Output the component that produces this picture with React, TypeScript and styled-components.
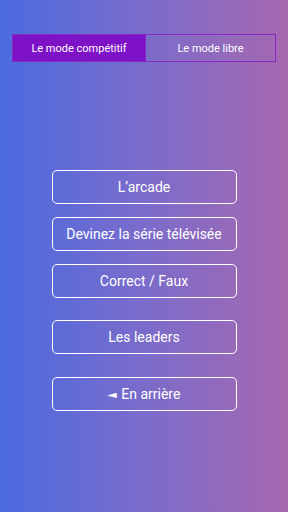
import React, { useState } from 'react';
import styled, { createGlobalStyle } from 'styled-components';

const GlobalStyle = createGlobalStyle`
    html, body {
        margin: 0;
        padding: 0;
    }
    body {
        font-family: Roboto, "Liberation Sans", sans-serif;
    }
`;

const menu = [
    { label: 'L\u2019arcade', gap: 0 },
    { label: 'Devinez la série télévisée', gap: 13 },
    { label: 'Correct / Faux', gap: 13 },
    { label: 'Les leaders', gap: 22 },
    { label: 'En arrière', gap: 23, back: true },
];

const App: React.FC = () => {
    const [mode, setMode] = useState(0);

    return (
        <Screen>
            <GlobalStyle />
            <Tabs>
                <Tab active={mode === 0} onClick={() => setMode(0)}>Le mode compétitif</Tab>
                <Tab active={mode === 1} onClick={() => setMode(1)}>Le mode libre</Tab>
            </Tabs>
            <Menu>
                {menu.map((item) => (
                    <MenuButton key={item.label} gap={item.gap}>
                        {item.back && <Arrow>{'\u25C4'}</Arrow>}
                        {item.label}
                    </MenuButton>
                ))}
            </Menu>
        </Screen>
    );
};

const Screen = styled.div`
    width: 288px;
    height: 512px;
    box-sizing: border-box;
    padding: 34px 12px 0;
    background: linear-gradient(90deg, #4a6be0 0%, #7b6ccb 50%, #a668b0 100%);
    display: flex;
    flex-direction: column;
    overflow: hidden;
`;

const Tabs = styled.div`
    display: grid;
    grid-template-columns: 132px 1fr;
    height: 28px;
    border: 1px solid #8a28c4;
    box-sizing: border-box;
`;

const Tab = styled.button<{ active: boolean }>`
    border: none;
    margin: 0;
    padding: 0;
    font-family: Roboto, "Liberation Sans", sans-serif;
    font-size: 11px;
    color: #ffffff;
    background: ${(p) => (p.active ? '#7d12c6' : 'transparent')};
    border-left: ${(p) => (p.active ? 'none' : '1px solid #8a28c4')};
    cursor: pointer;
`;

const Menu = styled.div`
    display: flex;
    flex-direction: column;
    align-items: center;
    margin-top: 108px;
`;

const MenuButton = styled.button<{ gap: number }>`
    width: 185px;
    height: 34px;
    margin-top: ${(p) => p.gap}px;
    background: transparent;
    border: 1.5px solid #ffffff;
    border-radius: 5px;
    color: #ffffff;
    font-family: Roboto, "Liberation Sans", sans-serif;
    font-size: 14px;
    cursor: pointer;
`;

const Arrow = styled.span`
    display: inline-block;
    font-family: "DejaVu Sans", sans-serif;
    font-size: 10px;
    transform: scaleX(1.3);
    margin-right: 6px;
    vertical-align: 1px;
`;

export default App;
